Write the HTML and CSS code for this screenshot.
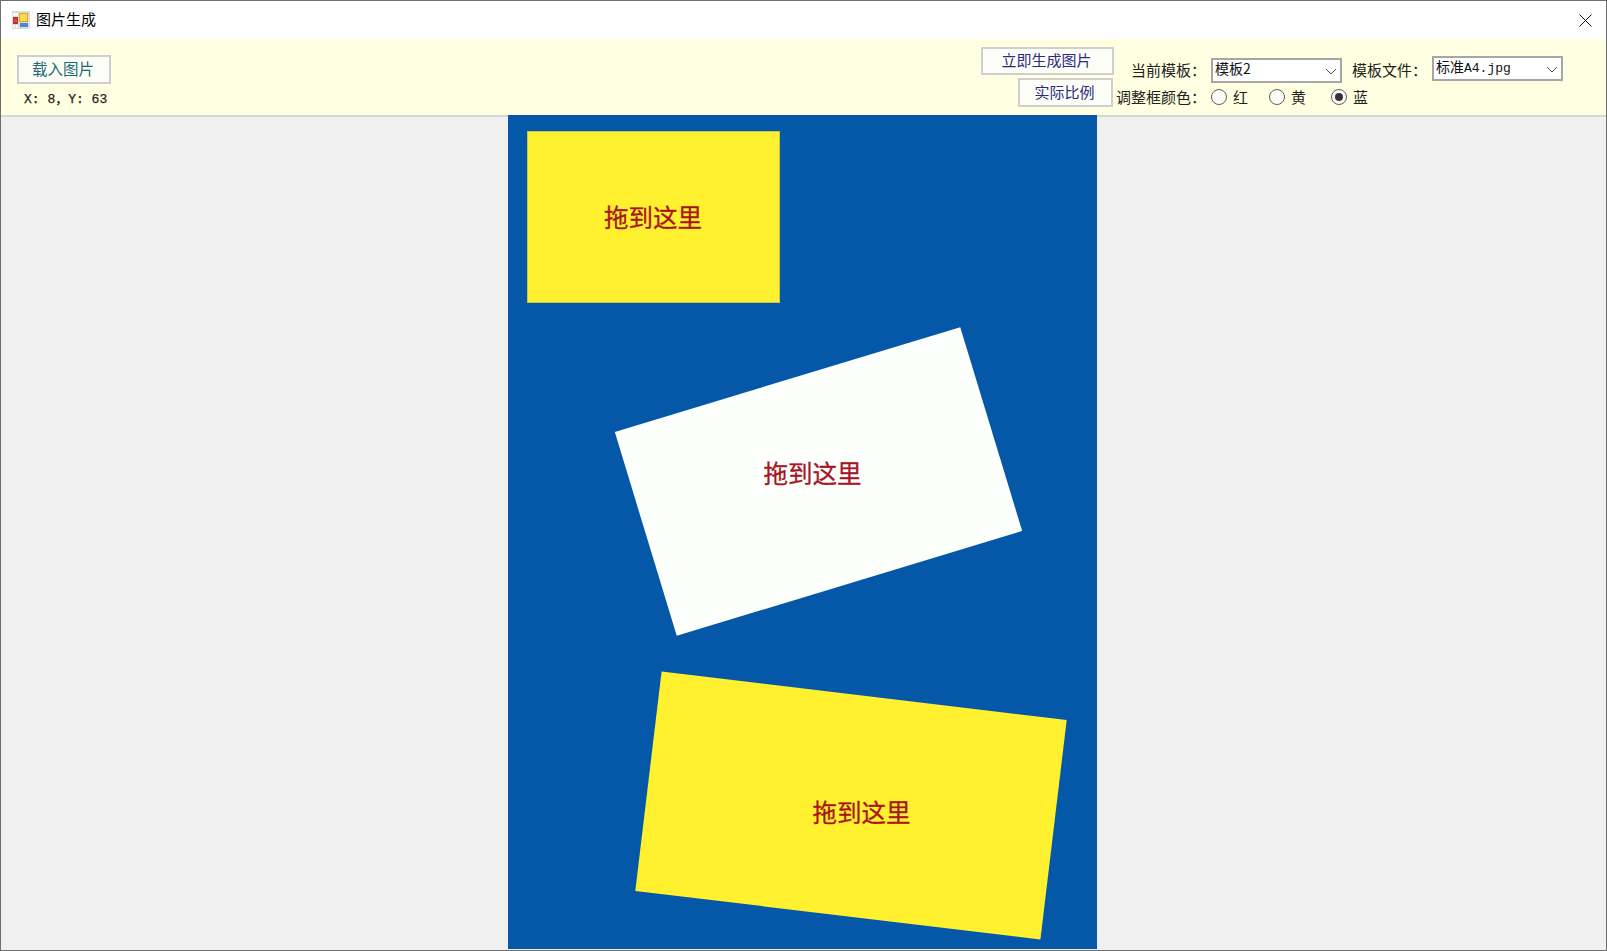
FILE: index.html
```html
<!DOCTYPE html>
<html lang="zh-CN">
<head>
<meta charset="utf-8">
<title>图片生成</title>
<link rel="stylesheet" href="styles.css">
</head>
<body>
<div class="window">
  <header class="titlebar">
    <svg class="app-icon" width="18" height="18" viewBox="0 0 18 18">
      <rect width="18" height="18" fill="#dcdcdc"/>
      <rect x="1" y="2" width="5" height="3" fill="#f6f6f6"/>
      <rect x="1" y="6" width="5" height="7" fill="#b8332a"/>
      <rect x="2" y="8" width="3" height="3" fill="#e8443a"/>
      <rect x="1" y="14" width="2" height="3" fill="#f6f6f6"/>
      <rect x="4" y="14" width="2" height="3" fill="#f6f6f6"/>
      <rect x="7" y="2" width="9" height="9" fill="#e3a41e"/>
      <rect x="8" y="3" width="7" height="7" fill="#fbd84e"/>
      <rect x="8" y="12" width="8" height="4" fill="#4d86d6"/>
    </svg>
    <span class="title">图片生成</span>
    <svg class="close" width="13" height="13" viewBox="0 0 13 13">
      <path d="M.5.5l12 12M12.5.5l-12 12" stroke="#111" stroke-width="1" fill="none"/>
    </svg>
  </header>

  <section class="toolbar">
    <div class="tools-left">
      <button class="btn btn-load">载入图片</button>
      <div class="coords">X: 8，Y: 63</div>
    </div>
    <div class="tools-right">
      <div class="btn-col">
        <button class="btn btn-make">立即生成图片</button>
        <button class="btn btn-ratio">实际比例</button>
      </div>
      <div class="fields">
        <div class="row row-top">
          <span class="label label-tpl">当前模板：</span>
          <div class="combo combo-tpl">
            <span class="combo-text">模板2</span>
            <svg class="chev" width="12" height="7" viewBox="0 0 12 7"><path d="M1 1l5 5 5-5" stroke="#555" fill="none"/></svg>
          </div>
          <span class="label label-file">模板文件：</span>
          <div class="combo combo-file">
            <span class="combo-text file-text">标准<span class="mono">A4.jpg</span></span>
            <svg class="chev" width="12" height="7" viewBox="0 0 12 7"><path d="M1 1l5 5 5-5" stroke="#555" fill="none"/></svg>
          </div>
        </div>
        <div class="row row-bottom">
          <span class="label">调整框颜色：</span>
          <span class="radio radio-red"><i class="dot"></i>红</span>
          <span class="radio radio-yellow"><i class="dot"></i>黄</span>
          <span class="radio radio-blue"><i class="dot on"></i>蓝</span>
        </div>
      </div>
    </div>
  </section>

  <main class="stage">
    <div class="canvas">
      <div class="slot slot-a"></div>
      <div class="slot slot-b"></div>
      <div class="slot slot-c"></div>
      <span class="drop drop-a">拖到这里</span>
      <span class="drop drop-b">拖到这里</span>
      <span class="drop drop-c">拖到这里</span>
    </div>
  </main>
</div>
</body>
</html>
```
FILE: styles.css
```css
* { box-sizing: border-box; }
html, body { margin: 0; padding: 0; }
body {
  width: 1607px;
  height: 951px;
  overflow: hidden;
  font-family: "Noto Sans CJK SC", "Liberation Sans", sans-serif;
  color: #222;
}
.window {
  width: 1607px;
  height: 951px;
  border: 1px solid #6e6e6e;
  display: flex;
  flex-direction: column;
  background: #f0f0f0;
}

/* title bar */
.titlebar {
  height: 38px;
  flex: none;
  background: #fff;
  display: flex;
  align-items: center;
  padding: 0 14px 0 11px;
}
.app-icon { flex: none; margin-right: 6px; }
.title { font-size: 15px; line-height: 20px; color: #000; margin-top: -3px; }
.close { margin-left: auto; }

/* toolbar */
.toolbar {
  height: 76px;
  flex: none;
  background: #ffffe1;
  display: flex;
}
.tools-left { padding: 16px 0 0 16px; }
.btn {
  display: block;
  margin: 0;
  padding: 0 2px 4px 0;
  background: #fdfdf8;
  border: 2px solid #cfcfcf;
  font-family: inherit;
  font-size: 15px;
  line-height: 1;
}
.btn-load { width: 94px; height: 29px; color: #1c6b70; font-size: 15.5px; padding-bottom: 2px; }
.coords {
  margin: 8px 0 0 7px;
  font-family: "Liberation Mono", "Noto Sans CJK SC", monospace;
  font-size: 13px;
  line-height: 16px;
  color: #222;
  -webkit-text-stroke: 0.25px #222;
}
.tools-right {
  margin-left: auto;
  display: flex;
  padding-right: 43px;
}
.btn-col {
  display: flex;
  flex-direction: column;
  align-items: flex-end;
  gap: 3px;
  padding-top: 8px;
}
.btn-make { width: 133px; height: 28px; color: #2b2b80; }
.btn-ratio { width: 95px; height: 29px; color: #2b2b80; margin-right: 1px; padding-bottom: 2px; }
.fields { margin-left: 2px; }
.row { display: flex; align-items: center; }
.row-top { height: 26px; margin-top: 18px; }
.row-bottom { height: 22px; margin-top: 3px; }
.label { font-size: 15px; line-height: 20px; white-space: nowrap; }
.label-tpl { margin-left: 15px; width: 80px; }
.label-file { margin-left: 10px; width: 80px; }
.combo {
  position: relative;
  width: 131px;
  height: 25px;
  background: #fff;
  border: 2px solid #a6a6a6;
  font-size: 14px;
  line-height: 20px;
  padding-left: 2px;
  display: flex;
  align-items: center;
  color: #111;
}
.combo-text { margin-top: -4px; }
.file-text { margin-top: -2px; }
.combo-file { margin-top: -3px; }
.mono { font-family: "Liberation Mono", monospace; font-size: 13px; }
.chev { margin-left: auto; margin-right: 3px; margin-top: 2px; flex: none; }
.radio {
  display: inline-flex;
  align-items: center;
  font-size: 15px;
  line-height: 20px;
}
.dot {
  width: 16px;
  height: 16px;
  border-radius: 50%;
  border: 1.5px solid #5f5f5f;
  background: #fdfdf8;
  margin-right: 6px;
  flex: none;
  position: relative;
}
.dot.on::after {
  content: "";
  position: absolute;
  left: 2.5px;
  top: 2.5px;
  width: 8px;
  height: 8px;
  border-radius: 50%;
  background: #333;
}
.radio-red { margin-left: 5px; }
.radio-yellow { margin-left: 21px; }
.radio-blue { margin-left: 25px; }

/* stage */
.stage {
  flex: 1;
  border-top: 2px solid #d6d6d6;
  padding-left: 507px;
  min-height: 0;
}
.canvas {
  position: relative;
  width: 589px;
  height: 834px;
  margin-top: -2px;
  background: #0558a8;
  overflow: hidden;
}
.slot { position: absolute; }
.slot-a {
  left: 19px; top: 16px;
  width: 253px; height: 172px;
  background: #fff12f;
  border: 1px solid #c4c552;
}
.slot-b {
  left: 129.7px; top: 259.7px;
  width: 361px; height: 213px;
  background: #fcfffb;
  transform: rotate(-16.9deg);
}
.slot-c {
  left: 138.7px; top: 580px;
  width: 408px; height: 221px;
  background: #fff12f;
  transform: rotate(6.83deg);
}
.drop {
  position: absolute;
  font-size: 24.5px;
  line-height: 30px;
  white-space: nowrap;
  color: #a8161a;
  -webkit-text-stroke: 0.3px currentColor;
}
.drop-a { left: 96px; top: 87px; }
.drop-b { left: 255.5px; top: 343px; color: #a51526; }
.drop-c { left: 304.5px; top: 682px; }
```
